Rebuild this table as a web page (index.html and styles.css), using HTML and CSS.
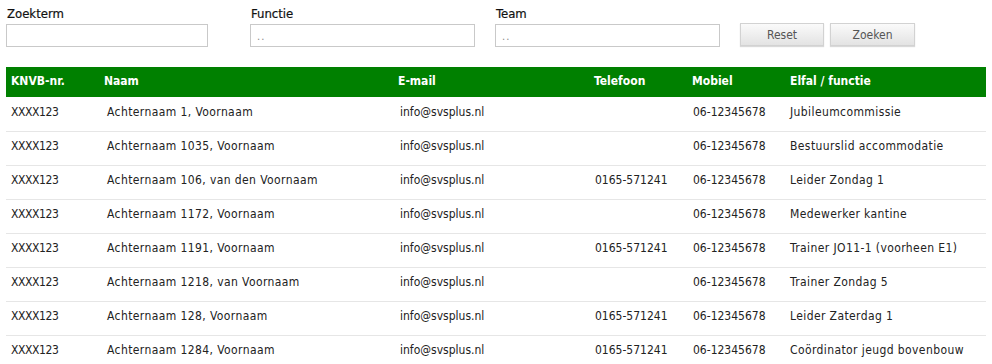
FILE: index.html
```html
<!DOCTYPE html>
<html lang="nl">
<head>
<meta charset="utf-8">
<title>Leden</title>
<link rel="stylesheet" href="styles.css">
</head>
<body>
<form class="filters">
  <div class="field field-zoek">
    <label class="label">Zoekterm</label>
    <input class="input input-short" type="text">
  </div>
  <div class="field">
    <label class="label">Functie</label>
    <div class="input input-long select">..</div>
  </div>
  <div class="field">
    <label class="label">Team</label>
    <div class="input input-long select">..</div>
  </div>
  <div class="buttons">
    <button type="button" class="btn btn-reset">Reset</button>
    <button type="button" class="btn btn-zoek">Zoeken</button>
  </div>
</form>
<table class="grid">
  <thead>
    <tr>
      <th class="c1">KNVB-nr.</th>
      <th class="c2">Naam</th>
      <th class="c3">E-mail</th>
      <th class="c4">Telefoon</th>
      <th class="c5">Mobiel</th>
      <th class="c6">Elfal / functie</th>
    </tr>
  </thead>
  <tbody>
    <tr><td class="c1">XXXX123</td><td class="c2">Achternaam 1, Voornaam</td><td class="c3">info@svsplus.nl</td><td class="c4"></td><td class="c5">06-12345678</td><td class="c6">Jubileumcommissie</td></tr>
    <tr><td class="c1">XXXX123</td><td class="c2">Achternaam 1035, Voornaam</td><td class="c3">info@svsplus.nl</td><td class="c4"></td><td class="c5">06-12345678</td><td class="c6">Bestuurslid accommodatie</td></tr>
    <tr><td class="c1">XXXX123</td><td class="c2">Achternaam 106, van den Voornaam</td><td class="c3">info@svsplus.nl</td><td class="c4">0165-571241</td><td class="c5">06-12345678</td><td class="c6">Leider Zondag 1</td></tr>
    <tr><td class="c1">XXXX123</td><td class="c2">Achternaam 1172, Voornaam</td><td class="c3">info@svsplus.nl</td><td class="c4"></td><td class="c5">06-12345678</td><td class="c6">Medewerker kantine</td></tr>
    <tr><td class="c1">XXXX123</td><td class="c2">Achternaam 1191, Voornaam</td><td class="c3">info@svsplus.nl</td><td class="c4">0165-571241</td><td class="c5">06-12345678</td><td class="c6">Trainer JO11-1 (voorheen E1)</td></tr>
    <tr><td class="c1">XXXX123</td><td class="c2">Achternaam 1218, van Voornaam</td><td class="c3">info@svsplus.nl</td><td class="c4"></td><td class="c5">06-12345678</td><td class="c6">Trainer Zondag 5</td></tr>
    <tr><td class="c1">XXXX123</td><td class="c2">Achternaam 128, Voornaam</td><td class="c3">info@svsplus.nl</td><td class="c4">0165-571241</td><td class="c5">06-12345678</td><td class="c6">Leider Zaterdag 1</td></tr>
    <tr><td class="c1">XXXX123</td><td class="c2">Achternaam 1284, Voornaam</td><td class="c3">info@svsplus.nl</td><td class="c4">0165-571241</td><td class="c5">06-12345678</td><td class="c6">Coördinator jeugd bovenbouw</td></tr>
  </tbody>
</table>
</body>
</html>
```

FILE: styles.css
```css
html, body {
  margin: 0;
  padding: 0;
  background: #fff;
}
body {
  font-family: "DejaVu Sans Condensed", "DejaVu Sans", Tahoma, sans-serif;
  font-size: 12px;
  color: #222;
}
.filters {
  display: flex;
  align-items: flex-start;
  padding: 6px 0 0 6px;
  height: 61px;
  box-sizing: border-box;
  margin: 0;
}
.field {
  display: flex;
  flex-direction: column;
  width: 245px;
}
.field-zoek {
  width: 244px;
}
.label {
  font-size: 13px;
  color: #111;
  height: 18px;
  line-height: 15px;
  padding-left: 1px;
  -webkit-text-stroke: 0.2px #111;
}
.input {
  height: 23px;
  box-sizing: border-box;
  border: 1px solid #c9c9c9;
  background: #fff;
  font: inherit;
  margin: 0;
  padding: 0 6px;
}
.input-short { width: 202px; }
.input-long { width: 225px; }
.select {
  color: #888;
  line-height: 24px;
  font-size: 11px;
  letter-spacing: 1px;
}
.buttons {
  display: flex;
  gap: 6px;
  padding-top: 17px;
}
.btn {
  height: 23px;
  box-sizing: border-box;
  border: 1px solid #d2d2d2;
  background: linear-gradient(#fafafa, #e3e3e3);
  box-shadow: 0 1px 1px rgba(0,0,0,0.15);
  color: #555;
  font-family: inherit;
  font-size: 12px;
  padding: 0;
  margin: 0;
}
.btn-reset { width: 84px; }
.btn-zoek { width: 85px; }
.grid {
  margin: 6px 0 0 6px;
  width: 980px;
  border-collapse: collapse;
  table-layout: fixed;
}
.grid th {
  background: #008000;
  color: #fff;
  font-weight: bold;
  font-size: 12px;
  text-align: left;
  height: 30px;
  box-sizing: border-box;
  padding: 0 0 2px 5px;
  vertical-align: middle;
}
.grid td {
  height: 34px;
  box-sizing: border-box;
  padding: 0 0 4px 5px;
  border-bottom: 1px solid #e6e6e6;
  vertical-align: middle;
  white-space: nowrap;
}
.grid .c1 { width: 93px; }
.grid .c2 { width: 294px; }
.grid .c3 { width: 196px; }
.grid .c4 { width: 98px; }
.grid .c5 { width: 98px; }
.grid .c6 { width: 201px; }
.grid td.c1 { letter-spacing: -0.4px; }
.grid td.c2 { padding-left: 8px; letter-spacing: 0.4px; }
.grid td.c3 { padding-left: 7px; }
.grid td.c4, .grid td.c5 { padding-left: 6px; }
.grid td.c6 { letter-spacing: 0.4px; }
```
